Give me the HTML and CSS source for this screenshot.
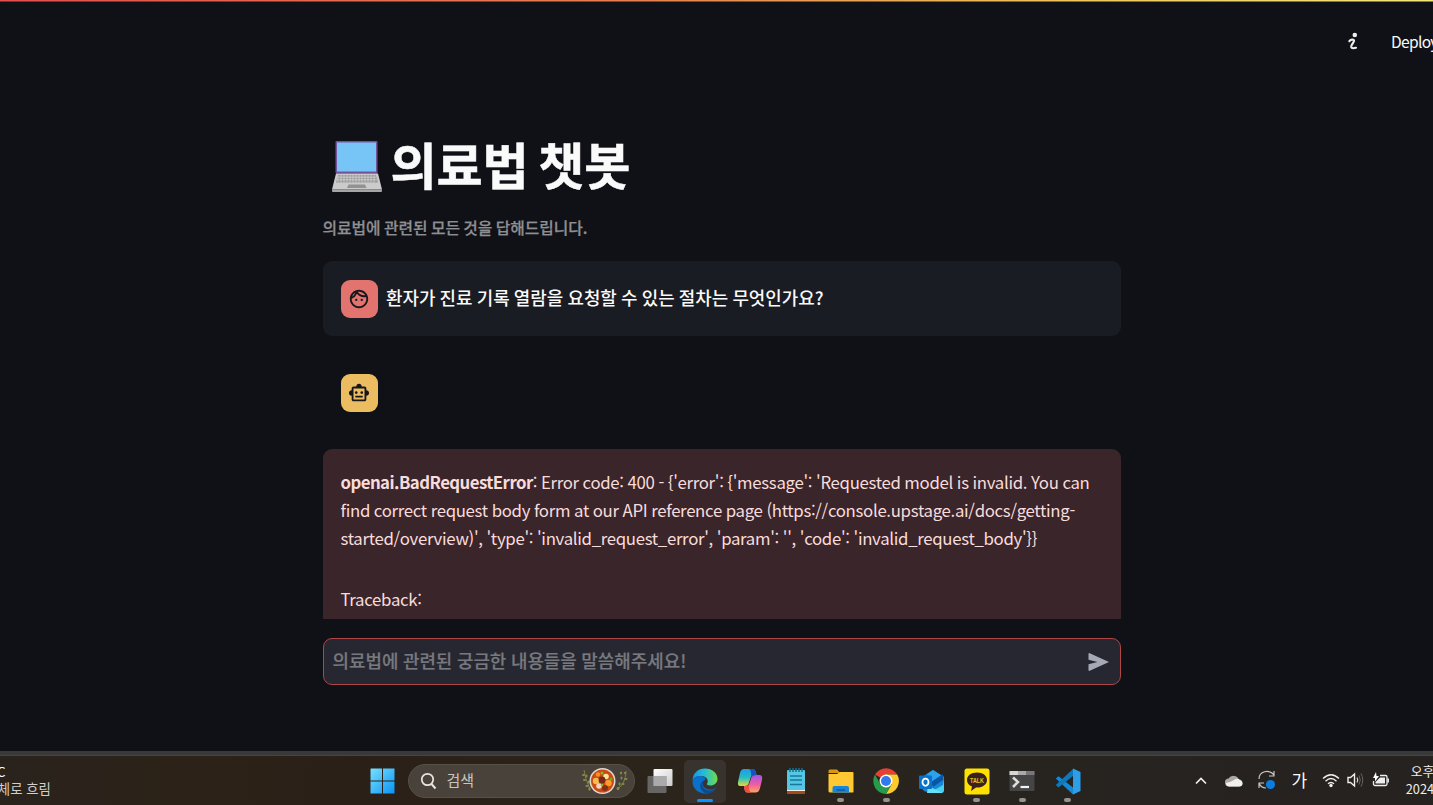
FILE: index.html
```html
<!DOCTYPE html>
<html lang="ko">
<head>
<meta charset="utf-8">
<title>의료법 챗봇</title>
<link rel="stylesheet" href="styles.css">
</head>
<body>
<div class="app">
  <div class="decoration"></div>
  <header class="toolbar">
    <svg class="running" width="12" height="20" viewBox="0 0 12 20"><circle cx="7.8" cy="3" r="2.3" fill="#eee"/><path d="M2.4 9.2C3.4 7.6 6.6 7 7 8.6C7.4 10.4 3.8 12.6 4.2 15C4.6 16.8 7.4 16.2 9 15.8" fill="none" stroke="#eee" stroke-width="2.2" stroke-linecap="round"/></svg>
    <span class="deploy">Deploy</span>
  </header>
  <main class="main">
    <h1 class="title">
      <svg class="laptop" width="52" height="52" viewBox="0 0 52 52">
        <rect x="4.5" y="1" width="42" height="32.5" rx="1" fill="#74539c"/><rect x="6" y="2.5" width="39" height="29" fill="#76c5f6"/>
        <path d="M5 33.5H47L51 49.5H1Z" fill="#cbcbcb"/><path d="M1 49.5H51V51Q51 52 50 52H2Q1 52 1 51Z" fill="#a5a5a5"/>
        <path d="M7 35H45L47 42.5H5Z" fill="#999"/>
        <path d="M6.5 37.2H45.5M6 39.8H46" stroke="#d2d2d2" stroke-width=".8"/><path d="M7 35.3V42M10 35V42.5M13 35V42.5M16 35V42.5M19 35V42.5M22 35V42.5M25 35V42.5M28 35V42.5M31 35V42.5M34 35V42.5M37 35V42.5M40 35V42.5M43 35V42.5" stroke="#d2d2d2" stroke-width=".8"/>
        <path d="M17.5 44.5H34L35.5 48H16Z" fill="#929292"/>
      </svg>
      <span>의료법 챗봇</span>
    </h1>
    <p class="caption">의료법에 관련된 모든 것을 답해드립니다.</p>
    <section class="message message-user">
      <div class="avatar avatar-user"><svg width="22" height="22" viewBox="0 0 24 24" fill="#16171c"><path d="M10.25 13a1.25 1.25 0 1 1-2.5 0 1.25 1.25 0 0 1 2.5 0M15 11.75a1.25 1.25 0 1 0 0 2.5 1.25 1.25 0 0 0 0-2.5M22 12c0 5.52-4.48 10-10 10S2 17.52 2 12 6.48 2 12 2s10 4.48 10 10M10.66 4.12C12.06 6.44 14.6 8 17.5 8c.46 0 .91-.05 1.34-.12C17.44 5.56 14.9 4 12 4c-.46 0-.91.05-1.34.12M4.42 9.47a8.05 8.05 0 0 0 3.66-4.44 8.05 8.05 0 0 0-3.66 4.44M20 12c0-.78-.12-1.53-.33-2.24-.7.15-1.42.24-2.17.24a10 10 0 0 1-7.76-3.69A10.02 10.02 0 0 1 4 11.86V12c0 4.41 3.59 8 8 8s8-3.59 8-8"/></svg></div>
      <p class="question">환자가 진료 기록 열람을 요청할 수 있는 절차는 무엇인가요?</p>
    </section>
    <section class="message">
      <div class="avatar avatar-bot"><svg width="22" height="22" viewBox="0 0 24 24" fill="#16171c"><path d="M20 9V7c0-1.1-.9-2-2-2h-3c0-1.66-1.34-3-3-3S9 3.34 9 5H6c-1.1 0-2 .9-2 2v2c-1.66 0-3 1.34-3 3s1.34 3 3 3v4c0 1.1.9 2 2 2h12c1.1 0 2-.9 2-2v-4c1.66 0 3-1.34 3-3s-1.34-3-3-3m-2 10H6V7h12zM9 13c-.83 0-1.5-.67-1.5-1.5S8.17 10 9 10s1.5.67 1.5 1.5S9.83 13 9 13m7.5-1.5c0 .83-.67 1.5-1.5 1.5s-1.5-.67-1.5-1.5.67-1.5 1.5-1.5 1.5.67 1.5 1.5M8 15h8v2H8z"/></svg></div>
    </section>
    <section class="error">
      <p><b>openai.BadRequestError</b>: Error code: 400 - {'error': {'message': 'Requested model is invalid. You can<br>find correct request body form at our API reference page (https://console.upstage.ai/docs/getting-<br>started/overview)', 'type': 'invalid_request_error', 'param': '', 'code': 'invalid_request_body'}}</p>
      <p class="traceback">Traceback:</p>
    </section>
    <div class="chat-input">
      <span>의료법에 관련된 궁금한 내용들을 말씀해주세요!</span>
      <svg width="22" height="20" viewBox="0 0 22 20"><path d="M1.2 1L21 10L1.2 19Q.5 19 .5 18V12.2L9.5 10L.5 7.8V2Q.5 1 1.2 1Z" fill="#a7a9b7"/></svg>
    </div>
  </main>
</div>
<footer class="taskbar">
  <div class="weather"><div class="temp">°C</div><div class="sky">대체로 흐림</div></div>
  <div class="start"><svg width="25" height="26" viewBox="0 0 25 26"><defs><linearGradient id="win" x1="0" y1="0" x2="1" y2="1"><stop offset="0" stop-color="#79e0ff"/><stop offset="1" stop-color="#0a93f5"/></linearGradient></defs><path d="M1 .5H12V12.5H.5V1Zm12 0H24.5V12.5H13ZM.5 13.5H12V25.5H.5Zm12.5 0H24.5V25.5H13Z" fill="url(#win)"/></svg></div>
  <div class="search">
    <svg width="17" height="18" viewBox="0 0 17 18"><circle cx="7.5" cy="7.5" r="5.7" fill="none" stroke="#e8e6e4" stroke-width="1.7"/><path d="M11.5 12L15.5 16.5" stroke="#e8e6e4" stroke-width="2"/></svg>
    <span>검색</span>
    <svg class="stew" width="48" height="28" viewBox="0 0 48 28">
      <path d="M3 3Q4 12 9 22M45 4Q45 15 37 22" fill="none" stroke="#7a8243" stroke-width="1"/>
      <g fill="#858c45"><ellipse cx="2.5" cy="8" rx="1.6" ry=".9"/><ellipse cx="5.5" cy="9" rx="1" ry="1.5"/><ellipse cx="3.5" cy="13" rx="1.6" ry=".9"/><ellipse cx="7.5" cy="15" rx="1" ry="1.5"/><ellipse cx="6" cy="19" rx="1.7" ry="1"/><ellipse cx="8.5" cy="22" rx="1.2" ry="1.7"/><ellipse cx="40" cy="6" rx="1" ry="1.5"/><ellipse cx="44" cy="6" rx="1.2" ry="1"/><ellipse cx="40.5" cy="11" rx="1" ry="1.6"/><ellipse cx="45" cy="12" rx="1.6" ry="1"/><ellipse cx="38.5" cy="17" rx="1" ry="1.7"/><ellipse cx="42" cy="17" rx="1.6" ry="1"/><ellipse cx="37" cy="21.5" rx="1.4" ry="1.7"/></g>
      <circle cx="21.5" cy="14" r="13" fill="#e3d9d4"/><circle cx="21.5" cy="14" r="11.5" fill="#c84b12"/>
      <circle cx="15" cy="14" r="3.2" fill="#f4bb50"/><circle cx="25" cy="9.5" r="2.8" fill="#ffe29a"/><circle cx="21" cy="13" r="3.4" fill="#722b18"/><circle cx="27.5" cy="16" r="3.2" fill="#ff9a28"/><circle cx="18" cy="19" r="2.8" fill="#f7d4bd"/><circle cx="24" cy="21" r="3" fill="#842f18"/><circle cx="17" cy="7.5" r="2.2" fill="#ff8d27"/><circle cx="30" cy="12" r="1.5" fill="#69ad27"/><circle cx="21" cy="6" r="1.5" fill="#7abb31"/><circle cx="21" cy="18" r="1.3" fill="#76b82e"/>
    </svg>
  </div>
  <nav class="apps">
    <div class="app-icon"><svg width="26" height="26" viewBox="0 0 26 26"><defs><linearGradient id="tv" x2="1" y2="1"><stop stop-color="#fff"/><stop offset="1" stop-color="#ccc"/></linearGradient></defs><rect x="6.5" y="1" width="19" height="17" rx="1" fill="url(#tv)"/><rect x=".5" y="8" width="19" height="17" rx="1" fill="#777" fill-opacity=".8"/><rect x="6.5" y="8" width="13" height="10" fill="#aaa"/></svg></div>
    <div class="app-icon active"><svg width="26" height="26" viewBox="0 0 26 26"><defs><linearGradient id="e1" x1="0" x2="1"><stop stop-color="#1b94de"/><stop offset=".5" stop-color="#26bfd4"/><stop offset="1" stop-color="#72dc45"/></linearGradient></defs><path d="M.5 12C1 5 6 .5 13 .5C20 .5 25.5 5 25.5 11C25.5 15 22 17.5 18.5 17.5C15.5 17.5 14.5 16.5 15 15.5C17 13 15 8 9 8C5 8 2 9.5 .5 12Z" fill="url(#e1)"/><path d="M.5 13C1 9.5 5 7.5 9 8C13 8.5 14 11 13 12C10 13 9.5 19 15 21C19 22.5 22 21 24 19.5C22 23.5 18 25.5 13.5 25.5C6 25.5 0 20 .5 13Z" fill="#0b70c9"/><path d="M13 12C10 13 8.5 20 15 22C19 23.5 22 21 24 19.5C22 23.5 18 25.5 14 25.5C7 23 6 14 13 12Z" fill="#0b4c91"/></svg><i></i></div>
    <div class="app-icon"><svg width="26" height="26" viewBox="0 0 26 26"><defs><linearGradient id="c1" x2="0" y2="1"><stop stop-color="#229bea"/><stop offset=".5" stop-color="#22bdc5"/><stop offset="1" stop-color="#e4db38"/></linearGradient><linearGradient id="c2" x2="0" y2="1"><stop stop-color="#a351ec"/><stop offset=".55" stop-color="#ed5f9f"/><stop offset="1" stop-color="#ffa45d"/></linearGradient></defs><path d="M7 1H16Q18.5 1 19.5 7H17Q14.5 7 13.5 10L11.5 16Q10.5 18 8 18H3Q.5 18 1 14L3 5Q4 1 7 1Z" fill="url(#c1)"/><path d="M12 1H16Q18.5 1 19.5 7H16Q14.5 7 13.8 9Q15 3 12 1Z" fill="#1753ba"/><path d="M19 7H22.5Q26 7 25 12L23 20Q22 24.5 18.5 24.5H10Q7.5 24.5 7 18H9Q11.5 18 12.5 15L14.5 9Q15.5 7 19 7Z" fill="url(#c2)"/><path d="M7 18H10Q11.5 18 12.2 16Q11 22 14 24.5H10Q7.5 24 7 18Z" fill="#f14d42"/></svg></div>
    <div class="app-icon"><svg width="22" height="28" viewBox="0 0 22 28"><rect x="2" y="22" width="18" height="5" fill="#a34c1a"/><rect x="2" y="20" width="18" height="4" fill="#f5eee7"/><rect x="2" y="3" width="18" height="20" rx="1" fill="#55c6e3"/><path d="M5 1V5M8 1V5M11 1V5M14 1V5M17 1V5" stroke="#176f8d" stroke-width="1.5"/><path d="M5 9H17M5 13H17M5 17.5H17" stroke="#14799c" stroke-width="1.3"/></svg></div>
    <div class="app-icon"><svg width="26" height="26" viewBox="0 0 26 26"><path d="M.5 3Q.5 1.5 2 1.5H9L12 5H.5Z" fill="#dc980c"/><path d="M.5 6H9L12 4H24.5Q25.5 4 25.5 5V24Q25.5 24.5 24 24.5H2Q.5 24.5 .5 23Z" fill="#ffc832"/><path d="M4.5 24.5V20Q4.5 18 6.5 18H19Q21 18 21 20V24.5Z" fill="#1684d8"/><path d="M8.5 22H17" stroke="#0957a0" stroke-width="1.3"/></svg><i></i></div>
    <div class="app-icon"><svg width="26" height="26" viewBox="0 0 26 26"><path d="M13 13L2 6.5A13 13 0 0 1 24.2 6.5H13Z" fill="#e83f33"/><path d="M24.2 6.5H13L18.6 16.2L13 26A13 13 0 0 0 24.2 6.5Z" fill="#fdc92b"/><path d="M2 6.5A13 13 0 0 0 13 26L18.6 16.2L7.4 16.2Z" fill="#279b4b"/><circle cx="13" cy="13" r="6.5" fill="#fff"/><circle cx="13" cy="13" r="5" fill="#3279eb"/></svg><i></i></div>
    <div class="app-icon"><svg width="27" height="25" viewBox="0 0 27 25"><path d="M4 8L15 1L26 8V21Q26 23 24 23H11Q4 23 4 18Z" fill="#1687d2"/><path d="M9 5L15 1L26 8L15 15Z" fill="#2aa2ed"/><path d="M13 13L25 5V11L15 18Z" fill="#0a55a7"/><path d="M26 10V21Q26 24 23 24H11L25 16Z" fill="#45d3ef"/><path d="M10 17L25 24H9Z" fill="#65e0f7"/><rect x="1" y="6.5" width="13" height="13.5" rx="1" fill="#0873c8"/><ellipse cx="7.5" cy="13.2" rx="3" ry="3.6" fill="none" stroke="#fff" stroke-width="1.8"/></svg></div>
    <div class="app-icon"><svg width="26" height="27" viewBox="0 0 26 27"><rect x=".5" y=".5" width="25" height="26" rx="2.5" fill="#ffe100"/><path d="M13 4.5C7 4.5 3 7.5 3 12C3 15 5 17.5 8 18.5L7 23L12 19.5C18.5 20 23 16.5 23 12C23 7.5 19 4.5 13 4.5Z" fill="#3b2020"/><text class="talk" x="13" y="14.5" text-anchor="middle" textLength="14" lengthAdjust="spacingAndGlyphs">TALK</text></svg><i></i></div>
    <div class="app-icon"><svg width="26" height="22" viewBox="0 0 26 22"><rect x=".5" y="1" width="25" height="20" rx="1" fill="#454545"/><path d="M.5 1H9V5H.5Z" fill="#d6d6d6"/><path d="M9 1H17V5H9Z" fill="#aaa"/><path d="M17 1H25.5V5H17Z" fill="#777"/><path d="M4 7.5L9 12L4 17" fill="none" stroke="#ddd" stroke-width="2.5"/><path d="M11.5 17H20" stroke="#f2f2f2" stroke-width="2.2"/></svg><i></i></div>
    <div class="app-icon"><svg width="26" height="27" viewBox="0 0 26 27"><path d="M3.5 8.3L18 19.5V26.5L.8 10.5Z" fill="#1687d3"/><path d="M18 1V8L3.5 19.5L.8 17Z" fill="#0a79be"/><path d="M18 .5L25.5 4V23L18 26.5Z" fill="#2d9fea"/></svg><i></i></div>
  </nav>
  <div class="tray">
    <svg class="chevron" width="12" height="8" viewBox="0 0 12 8"><path d="M1 6.5L6 1.5L11 6.5" fill="none" stroke="#eee" stroke-width="1.7"/></svg>
    <svg class="cloud" width="18" height="13" viewBox="0 0 18 13"><path d="M4.5 12.5A4 4 0 0 1 3.5 4.5A6 6 0 0 1 14 5.5A3.5 3.5 0 0 1 14 12.5Z" fill="#aaa9a7"/><path d="M4 12.5Q1 12 1 9Q6 8 9 6Q12 3.5 15 6Q17.5 7 17.5 9.5Q17.5 12.5 14 12.5Z" fill="#f1f1f0"/></svg>
    <svg class="sync" width="20" height="20" viewBox="0 0 20 20"><path d="M2 9C2 1 12-1 17 5M17 1V6H12M2 18V13H7M2 13Q4 18 9 18" fill="none" stroke="#c9c7c5" stroke-width="1.2"/><circle cx="13.5" cy="14.5" r="4.5" fill="#0b7ddd"/></svg>
    <span class="ime">가</span>
    <svg class="wifi" width="18" height="15" viewBox="0 0 18 15"><path d="M1 5.5Q9-2 17 5.5M3.5 8.2Q9 3 14.5 8.2M6 10.8Q9 8 12 10.8" fill="none" stroke="#eee" stroke-width="1.4"/><circle cx="9" cy="12.5" r="1.7" fill="#eee"/></svg>
    <svg class="sound" width="17" height="16" viewBox="0 0 17 16"><path d="M1 5.5H3.5L7.5 2V14L3.5 10.5H1Z" fill="none" stroke="#eee" stroke-width="1.4"/><path d="M10 5.5Q11.5 8 10 10.5" fill="none" stroke="#ddd" stroke-width="1.2"/><path d="M12 3.5Q14.5 8 12 12.5M14 1.5Q17.5 8 14 14.5" fill="none" stroke="#66625f" stroke-width="1"/></svg>
    <svg class="battery" width="18" height="16" viewBox="0 0 18 16"><path d="M8 3.5H13.5Q15 3.5 15 5V12Q15 13.5 13.5 13.5H3Q1.5 13.5 1.5 12V9" fill="none" stroke="#eee" stroke-width="1.3"/><path d="M8 5.5H13V11.5H3.5V10Z" fill="#eee"/><path d="M16.2 6.5V10.5" stroke="#eee" stroke-width="1.5"/><path d="M4 0L1 6H3V9.5L7 4H4.5Z" fill="#fff"/></svg>
    <div class="clock"><div class="time">오후</div><div>2024</div></div>
  </div>
</footer>
</body>
</html>
```
FILE: styles.css
```css
* { box-sizing: border-box; }
body { margin: 0; width: 1433px; height: 805px; overflow: hidden; background: #0f1116; color: #fafafa; font-family: "Noto Sans CJK KR", sans-serif; }
p, h1 { margin: 0; }
svg { display: block; flex: none; }
.app { height: 751px; overflow: hidden; }
.decoration { height: 2px; background: linear-gradient(90deg, #e44f50 0%, #e6804f 45%, #eec65d 75%, #f3e77b 100%); background-size: 100% 1.5px; background-repeat: no-repeat; }
.toolbar { height: 80px; padding: 0 0 2px 1347px; display: flex; align-items: center; white-space: nowrap; }
.running { margin: 2px 32px 0 0; }
.deploy { font-size: 15.6px; line-height: 24px; letter-spacing: -0.7px; }
.main { width: 798px; margin-left: 322.5px; }
.title { height: 76px; margin-top: 43px; padding-left: 9px; display: flex; align-items: center; font-size: 50.2px; line-height: 76px; font-weight: 700; letter-spacing: -0.2px; word-spacing: -4px; white-space: nowrap; -webkit-text-stroke: 0.5px #fafafa; }
.laptop { margin: 5px 7.5px 0 -0.5px; }
.caption { margin-top: 14px; height: 26px; line-height: 26px; font-size: 15.8px; font-weight: 500; word-spacing: -1.1px; color: #8e8f93; -webkit-text-stroke: 0.25px #8e8f93; white-space: nowrap; }
.message { height: 75px; padding: 19px 18px 18px; display: flex; gap: 9px; border-radius: 9px; }
.message-user { margin-top: 20px; background: #1a1c23; }
.message + .message { margin-top: 19px; }
.avatar { width: 37px; height: 38px; border-radius: 9px; display: flex; align-items: center; justify-content: center; flex: none; }
.avatar-user { background: #e3736e; }
.avatar-bot { background: #ebbd60; }
.question { margin-left: -0.5px; font-size: 17.9px; line-height: 34px; font-weight: 500; word-spacing: -0.8px; white-space: nowrap; }
.error { height: 170px; margin-top: 19px; padding: 18.5px 18px; border-radius: 9px 9px 0 0; background: #3a252a; color: #f8dcdc; font-size: 16.8px; letter-spacing: -0.31px; word-spacing: -0.55px; line-height: 28.2px; white-space: nowrap; overflow: hidden; }
.error b { letter-spacing: -0.55px; }
.traceback { margin-top: 33px; }
.chat-input { margin-top: 19px; height: 47px; padding: 0 10px 3px 9px; display: flex; align-items: center; justify-content: space-between; border: 1px solid #b04545; border-radius: 9px; background: #262730; color: #78797e; font-size: 17.9px; font-weight: 500; line-height: 26px; word-spacing: -0.4px; white-space: nowrap; -webkit-text-stroke: 0.2px #78797e; }
.chat-input svg { margin-top: 3px; }
.taskbar { height: 54px; display: flex; align-items: flex-start; overflow: hidden; border-top: 4px solid #393939; background: linear-gradient(90deg, #29231d 0, #2c2218 12%, #2a2017 25%, #2b241b 45%, #27231f 75%, #25221f 100%); box-shadow: inset 0 1px #484540; }
.taskbar > * { flex: none; }
.weather { width: 361px; margin-top: 8px; white-space: nowrap; font-size: 13.4px; line-height: 17px; color: #d2cfcb; }
.temp { margin-left: -8px; color: #fff; }
.sky { margin-left: -14.5px; }
.start { width: 47px; margin-top: 13px; padding-left: 9px; }
.search { width: 227px; height: 34px; margin-top: 9px; padding: 0 5px 0 11px; display: flex; align-items: center; border-radius: 17px; background: #49423a; border: 1px solid #575047; color: #c9c5c0; font-size: 15px; }
.search span { margin: -2px 0 0 9.5px; line-height: 22px; }
.stew { margin-left: auto; }
.apps { display: flex; margin-left: 3.5px; padding-top: 5px; gap: 3.35px; }
.app-icon { width: 42px; height: 43px; padding-bottom: 1px; display: flex; align-items: center; justify-content: center; position: relative; border-radius: 5px; }
.active { background: #38332e; }
.app-icon i { position: absolute; bottom: 1px; left: 17.5px; width: 7px; height: 4px; border-radius: 2px; background: #96928e; }
.active i { left: 13px; width: 16px; height: 3px; bottom: 1px; background: #0c95ff; }
.talk { font: 700 6.5px "Liberation Sans", sans-serif; fill: #e5ca17; }
.tray { height: 50px; margin-left: 106px; display: flex; align-items: center; white-space: nowrap; }
.chevron { margin-top: 1px; }
.cloud { margin-left: 18px; }
.sync { margin-left: 14px; }
.ime { margin-left: 15px; font-size: 17px; line-height: 24px; }
.wifi { margin-left: 15px; }
.sound { margin-left: 7px; }
.battery { margin-left: 8px; }
.clock { margin-left: 15.5px; width: 40px; font-size: 12.8px; line-height: 18px; color: #f0eeeb; }
.time { padding-left: 5px; }
```
